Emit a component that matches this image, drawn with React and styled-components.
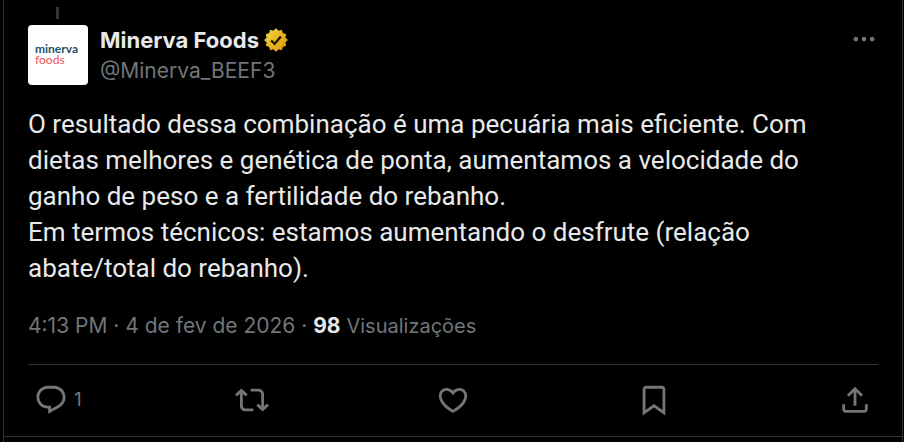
import React from 'react'
import styled, { createGlobalStyle } from "styled-components";

const GlobalStyle = createGlobalStyle`
  * {
    box-sizing: border-box;
  }
  body {
    margin: 0;
    background-color: #000;
    color: #e7e9ea;
    font-family: Inter, "Liberation Sans", sans-serif;
  }
`;

const Column = styled.main`
  min-height: 100vh;
  margin: 0 1px 0 3px;
  border-left: 1px solid #2f3336;
  border-right: 1px solid #2f3336;
`;
const Article = styled.article`
  padding: 7px 24px 0px;
  border-bottom: 1px solid #2f3336;
`;
const ThreadLine = styled.div`
  width: 3px;
  height: 12px;
  margin: 0px 28px 6px;
  background-color: #333639;
`;
const Header = styled.header`
  display: flex;
  align-items: flex-start;
  gap: 12px;
`;
const Avatar = styled.a`
  display: flex;
  flex-direction: column;
  justify-content: center;
  flex-shrink: 0;
  width: 60px;
  height: 60px;
  padding: 0px 0px 2px 7px;
  border-radius: 4px;
  background-color: #fff;
  text-decoration: none;
`;
const LogoWord = styled.span`
  color: ${(props) => props.$color};
  font-family: Lato, "Liberation Sans", sans-serif;
  font-size: 12px;
  font-weight: ${(props) => props.$weight};
  line-height: 11px;
`;
const Names = styled.div`
  flex: 1;
  display: flex;
  flex-direction: column;
  align-items: flex-start;
`;
const Name = styled.a`
  display: flex;
  align-items: center;
  gap: 4px;
  color: #e7e9ea;
  font-size: 22px;
  font-weight: 700;
  line-height: 30px;
  text-decoration: none;
`;
const Handle = styled.a`
  color: #71767b;
  font-size: 21px;
  line-height: 32px;
  text-decoration: none;
`;
const IconButton = styled.button`
  display: flex;
  align-items: center;
  gap: 6px;
  padding: 0px;
  border: none;
  background: none;
  color: #71767b;
  font-family: inherit;
  font-size: 19px;
  cursor: pointer;

  &:hover {
    color: #1d9bf0;
  }
`;
const Icon = styled.svg`
  display: block;
  width: ${(props) => props.$size}px;
  height: ${(props) => props.$size}px;
  fill: currentColor;
`;
const Text = styled.p`
  margin: 19px 0px 0px;
  padding-right: 12px;
  font-family: Roboto, "Liberation Sans", sans-serif;
  font-size: 26px;
  line-height: 36px;
  white-space: pre-line;
`;
const Meta = styled.div`
  margin: 25px 0px 23px;
  color: #71767b;
  font-size: 21px;
  line-height: 30px;
`;
const MetaLink = styled.a`
  color: inherit;
  text-decoration: none;
`;
const Views = styled.strong`
  color: #e7e9ea;
  font-weight: 700;
`;
const ViewsLabel = styled.span`
  font-size: 20px;
`;
const Actions = styled.div`
  display: grid;
  grid-template-columns: repeat(4, 1fr) auto;
  align-items: center;
  height: 72px;
  padding: 0px 6px 2px;
  border-top: 1px solid #2f3336;
`;

const paths = {
  reply: "M1.751 10c0-4.42 3.584-8 8.005-8h4.366c4.49 0 8.129 3.64 8.129 8.13 0 2.96-1.607 5.68-4.196 7.11l-8.054 4.46v-3.69h-.067c-4.49.1-8.183-3.51-8.183-8.01zm8.005-6c-3.317 0-6.005 2.69-6.005 6 0 3.37 2.77 6.08 6.138 6.01l.351-.01h1.761v2.3l5.087-2.81c1.951-1.08 3.163-3.13 3.163-5.36 0-3.39-2.744-6.13-6.129-6.13H9.756z",
  repost: "M4.5 3.88l4.432 4.14-1.364 1.46L5.5 7.55V16c0 1.1.896 2 2 2H13v2H7.5c-2.209 0-4-1.79-4-4V7.55L1.432 9.48.068 8.02 4.5 3.88zM16.5 6H11V4h5.5c2.209 0 4 1.79 4 4v8.45l2.068-1.93 1.364 1.46-4.432 4.14-4.432-4.14 1.364-1.46 2.068 1.93V8c0-1.1-.896-2-2-2z",
  like: "M16.697 5.5c-1.222-.06-2.679.51-3.89 2.16l-.805 1.09-.806-1.09C9.984 6.01 8.526 5.44 7.304 5.5c-1.243.07-2.349.78-2.91 1.91-.552 1.12-.633 2.78.479 4.82 1.074 1.97 3.257 4.27 7.129 6.61 3.87-2.34 6.052-4.64 7.126-6.61 1.111-2.04 1.03-3.7.477-4.82-.561-1.13-1.666-1.84-2.908-1.91zm4.187 7.69c-1.351 2.48-4.001 5.12-8.379 7.67l-.503.3-.504-.3c-4.379-2.55-7.029-5.19-8.382-7.67-1.36-2.5-1.41-4.86-.514-6.67.887-1.79 2.647-2.91 4.601-3.01 1.651-.09 3.368.56 4.798 2.01 1.429-1.45 3.146-2.1 4.796-2.01 1.954.1 3.714 1.22 4.601 3.01.896 1.81.846 4.17-.514 6.67z",
  bookmark: "M4 4.5C4 3.12 5.119 2 6.5 2h11C18.881 2 20 3.12 20 4.5v18.44l-8-5.71-8 5.71V4.5zM6.5 4c-.276 0-.5.22-.5.5v14.56l6-4.29 6 4.29V4.5c0-.28-.224-.5-.5-.5h-11z",
  share: "M12 2.59l5.7 5.7-1.41 1.42L13 6.41V16h-2V6.41l-3.3 3.3-1.41-1.42L12 2.59zM21 15l-.02 3.51c0 1.38-1.12 2.49-2.5 2.49H5.5C4.11 21 3 19.88 3 18.5V15h2v3.5c0 .28.22.5.5.5h12.98c.28 0 .5-.22.5-.5L19 15h2z",
  more: "M3 12c0-1.1.9-2 2-2s2 .9 2 2-.9 2-2 2-2-.9-2-2zm9 2c1.1 0 2-.9 2-2s-.9-2-2-2-2 .9-2 2 .9 2 2 2zm7 0c1.1 0 2-.9 2-2s-.9-2-2-2-2 .9-2 2 .9 2 2 2z",
};

const actions = [
  { icon: "reply", label: "Responder", count: 1 },
  { icon: "repost", label: "Repostar" },
  { icon: "like", label: "Curtir" },
  { icon: "bookmark", label: "Salvar" },
  { icon: "share", label: "Compartilhar" },
];

// twelve-pointed seal
const sealPoints = Array.from({ length: 24 }, (_, i) => {
  const r = i % 2 === 0 ? 9.3 : 7.6;
  const a = (i * Math.PI) / 12;
  return `${(11 + r * Math.sin(a)).toFixed(2)},${(11 - r * Math.cos(a)).toFixed(2)}`;
}).join(" ");

const GoldBadge = () => (
  <Icon $size={26} viewBox="0 0 22 22" aria-hidden="true">
    <defs>
      <linearGradient id="gold" x1="0" y1="0" x2="1" y2="1">
        <stop offset="0" stopColor="#f4e05a" />
        <stop offset="0.45" stopColor="#e8b820" />
        <stop offset="1" stopColor="#d99a10" />
      </linearGradient>
    </defs>
    <polygon points={sealPoints} fill="url(#gold)" stroke="url(#gold)" strokeWidth="1" strokeLinejoin="round" />
    <path d="M6.9 11.4l2.9 2.9 5.3-6.2" fill="none" stroke="#1c1400" strokeWidth="1.9" />
  </Icon>
);

const App = () => {
  return (
    <>
      <GlobalStyle />
      <Column>
        <Article>
          <ThreadLine />
          <Header>
            <Avatar href="#perfil">
              <LogoWord $color="#1d5068" $weight={700}>minerva</LogoWord>
              <LogoWord $color="#f0606c" $weight={500}>foods</LogoWord>
            </Avatar>
            <Names>
              <Name href="#perfil">
                Minerva Foods
                <GoldBadge />
              </Name>
              <Handle href="#perfil">@Minerva_BEEF3</Handle>
            </Names>
            <IconButton aria-label="Mais">
              <Icon $size={28} viewBox="0 0 24 24"><path d={paths.more} /></Icon>
            </IconButton>
          </Header>
          <Text>
            {"O resultado dessa combinação é uma pecuária mais eficiente. Com dietas melhores e genética de ponta, aumentamos a velocidade do ganho de peso e a fertilidade do rebanho.\nEm termos técnicos: estamos aumentando o desfrute (relação abate/total do rebanho)."}
          </Text>
          <Meta>
            <MetaLink href="#post">4:13 PM · 4 de fev de 2026</MetaLink> · <Views>98</Views> <ViewsLabel>Visualizações</ViewsLabel>
          </Meta>
          <Actions>
            {actions.map((action) => (
              <IconButton key={action.icon} aria-label={action.label}>
                <Icon $size={34} viewBox="0 0 24 24"><path d={paths[action.icon]} /></Icon>
                {action.count}
              </IconButton>
            ))}
          </Actions>
        </Article>
      </Column>
    </>
  );
};

export default App;
